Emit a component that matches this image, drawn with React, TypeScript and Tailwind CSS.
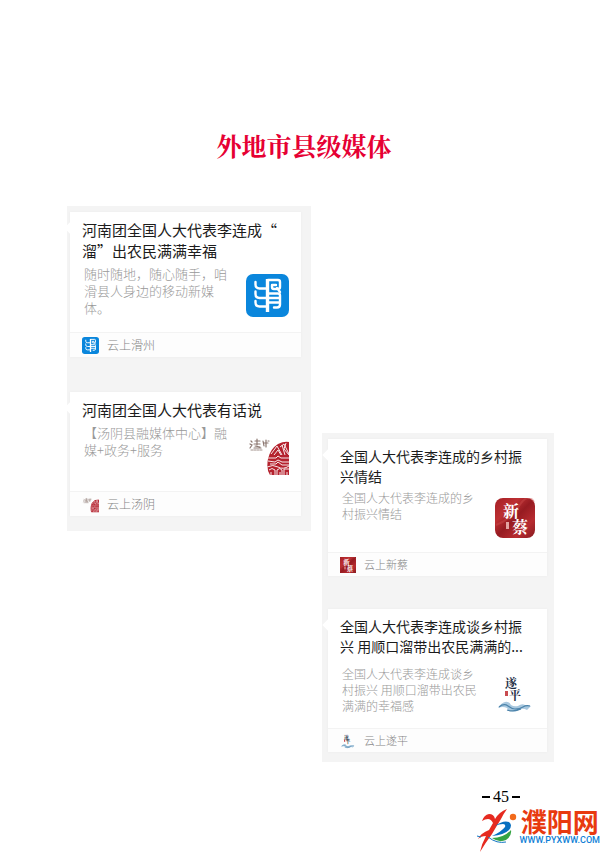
import type { ReactNode } from "react";

const sans = "font-['Noto_Sans_CJK_SC',sans-serif]";
const serif = "font-['Noto_Serif_CJK_SC','Noto_Sans_CJK_SC',serif]";

function HuazhouLogo({ className }: { className: string }) {
  return (
    <svg viewBox="0 0 43 43" className={className} role="img" aria-label="云上滑州">
      <rect width="43" height="43" rx="7" fill="#0a86dc" />
      <g fill="none" stroke="#fff" strokeWidth="2.4" strokeLinecap="round" strokeLinejoin="round">
        <path d="M9.500 8v2.500q0 4 4 4H20" />
        <path d="M9.500 17.500v2.500q0 4 4 4H20" />
        <path d="M9.500 27v1.500q0 4 4 4H20" />
        <path d="M22 6h10q2 0 2 2v5q0 2-2 2h-4q-2 0-2-2v-2h4M31 14l3 4" />
        <path d="M22 19.500h10q2 0 2 2v9q0 3-3 3h-3" />
        <path d="M22 24h11M22 28.500h11" />
      </g>
      <path d="M21.500 5v33" stroke="#fff" strokeWidth="3.400" />
    </svg>
  );
}

function TangyinLogo({ className }: { className: string }) {
  return (
    <svg viewBox="0 0 43 43" className={className} role="img" aria-label="云上汤阴">
      <defs>
        <clipPath id="seal">
          <path d="M43 9V42H24Q20 36 22 26Q24 16 32 11Q38 8 43 9Z" />
        </clipPath>
      </defs>
      <g fill="none" stroke="#8c7770" strokeWidth="1.200" strokeLinecap="round">
        <path d="M5 8l1 1M4 11l2 1-2 3M9 8h5M11 6v6M8 11h6M9 13l5 1M8 15h7M17 8l1 5M20 7v7M22 8h1M18 10h4" />
        <path d="M5 17h11" strokeWidth="0.800" strokeDasharray="2 1" />
      </g>
      <g clipPath="url(#seal)">
        <rect x="20" y="8" width="23" height="35" fill="#b5222e" />
        <g fill="none" stroke="#fff" strokeWidth="0.900">
          <path d="M25 21l6-8 5 9M28 22l4-5 3 5M34 14l4-3 5 10M36 12l3 10M40 10l-2 6 5 6" />
          <path d="M22 25h8l2-2 3 2h8M22 28l7 1 3-2 4 2h7M24 31h6l2-2 4 3h7" />
          <path d="M21 34q6-3 11 0t11-1M23 37q3-3 6 0v5M31 42v-5q3-3 5 0v5M38 42v-6h5M25 42v-3M34 42v-3M41 42v-3" />
        </g>
      </g>
    </svg>
  );
}

function XincaiLogo({ className, rounded }: { className: string; rounded: boolean }) {
  return (
    <svg viewBox="0 0 40 40" className={className} role="img" aria-label="云上新蔡">
      <defs>
        <linearGradient id="silk" x1="0" y1="0" x2="1" y2="1">
          <stop offset="0" stopColor="#a51f25" />
          <stop offset="0.300" stopColor="#bd3033" />
          <stop offset="0.500" stopColor="#961b21" />
          <stop offset="0.750" stopColor="#b72b30" />
          <stop offset="1" stopColor="#871b20" />
        </linearGradient>
      </defs>
      <rect width="40" height="40" rx={rounded ? 8 : 0} fill="url(#silk)" />
      <path d="M1 27Q15 22 24 8T39 4" fill="none" stroke="#d05050" strokeOpacity="0.400" strokeWidth="2" />
      <text x="8" y="19" fontSize="16" fontWeight="700" fill="#fff" className={serif}>新</text>
      <text x="17" y="35" fontSize="16" fontWeight="700" fill="#fff" className={serif}>蔡</text>
      <rect x="11" y="24" width="3" height="7" fill="#e3a3a0" />
    </svg>
  );
}

function SuipingLogo({ className }: { className: string }) {
  return (
    <svg viewBox="0 0 40 40" className={className} role="img" aria-label="云上遂平">
      <text x="10" y="14" fontSize="12" fontWeight="700" fill="#1c2d44" className={serif}>遂</text>
      <text x="14" y="26" fontSize="12" fontWeight="700" fill="#1c2d44" className={serif}>平</text>
      <rect x="10" y="17" width="3" height="5" fill="#c94b50" />
      <path d="M3 34Q6 29 10 28Q14 27 16 31Q19 33 23 32Q27 29 30 31Q34 31 36 32L32 36Q27 33 22 37Q15 39 12 34Q8 32 3 34Z" fill="#a9c8df" />
      <path d="M4 33q5-4 9-1t7 3q5 0 8-2t7-1M12 36q7 2 14-1" fill="none" stroke="#4d84ab" strokeWidth="1.200" />
    </svg>
  );
}

type CardProps = {
  title: string;
  description: string;
  source: string;
  large?: boolean;
  spaced?: boolean;
  logo: ReactNode;
  badge: ReactNode;
};

function ArticleCard({ title, description, source, large, spaced, logo, badge }: CardProps) {
  return (
    <article className="relative bg-white shadow-[0_0_2px_#ececec]">
      <span className="absolute top-3 -left-1 size-2 rotate-45 bg-white" />
      <div className={large ? "px-3 pt-[7px] pb-[15px]" : "px-3 pt-[7px] pb-[14px]"}>
        <h2
          className={
            large
              ? "text-[15px] leading-[21px] whitespace-pre text-[#1c1c1c]"
              : "text-[14px] leading-[20px] text-[#1c1c1c]"
          }
        >
          {title}
        </h2>
        <div className={spaced ? "mt-[10px] flex justify-between" : "mt-1 flex justify-between"}>
          <p
            className={
              large
                ? "w-[146px] pl-[2px] text-[13px] leading-[17px] font-light text-[#999]"
                : "w-[140px] pl-[2px] text-[12px] leading-[16px] font-light text-[#999]"
            }
          >
            {description}
          </p>
          <div className={large ? "mt-[9px] shrink-0" : "mt-2 shrink-0"}>{logo}</div>
        </div>
      </div>
      <footer
        className={
          large
            ? "flex h-[25px] items-center gap-2 border-t border-[#f3f3f3] bg-[#fdfdfd] px-3 text-[12px] font-light text-[#858585]"
            : "flex h-[24px] items-center gap-2 border-t border-[#f3f3f3] bg-[#fdfdfd] px-3 text-[11px] font-light text-[#858585]"
        }
      >
        {badge}
        <span>{source}</span>
      </footer>
    </article>
  );
}

function SiteLogo() {
  return (
    <svg viewBox="0 0 43 44" className="h-[44px] w-[43px]" role="img" aria-label="濮阳网">
      <path d="M5 12Q7 6 12 5Q17 5 18 10Q22 3 30 0Q27 4 24 10Q19 18 15 25Q9 33 3 43Q5 34 9 27Q4 27 1 30Q4 24 12 21L16 14Q14 10 11 10Q8 10 5 12Z" fill="#e62a20" />
      <path d="M18 17Q26 11 32 13Q36 16 32 21Q27 26 15 27Q24 23 28 18Q29 15 26 15Q22 15 18 17Z" fill="#0870c0" />
      <path d="M15 29Q27 29 34 21Q35 27 29 31Q22 34 15 29Z" fill="#35a443" />
      <path d="M0 27l4 1M11 28q9 7 18 5" stroke="#1477c3" strokeWidth="1" fill="none" />
      <circle cx="36" cy="8" r="3.200" fill="#f26a1b" />
    </svg>
  );
}

export default function App() {
  return (
    <div lang="zh-CN" className={`min-h-screen bg-white ${sans}`}>
      <header className="pt-[125px] pl-1 text-center">
        <h1 className={`text-[25px] leading-[40px] font-bold text-[#e60033] ${serif}`}>外地市县级媒体</h1>
      </header>

      <main className="mt-[41px] grid grid-cols-[244fr_232fr] items-start gap-[11px] pr-[50px] pl-[67px]">
        <section className="flex flex-col gap-[35px] bg-[#f4f4f4] pt-[6px] pr-[10px] pb-[15px] pl-[3px]">
          <ArticleCard
            large
            title={"河南团全国人大代表李连成“\n溜”出农民满满幸福"}
            description="随时随地，随心随手，咱滑县人身边的移动新媒体。"
            source="云上滑州"
            logo={<HuazhouLogo className="size-[43px]" />}
            badge={<HuazhouLogo className="size-[17px]" />}
          />
          <ArticleCard
            large
            title="河南团全国人大代表有话说"
            description="【汤阴县融媒体中心】融媒+政务+服务"
            source="云上汤阴"
            logo={<TangyinLogo className="size-[43px]" />}
            badge={<TangyinLogo className="size-[17px]" />}
          />
        </section>

        <section className="mt-[227px] flex flex-col gap-[33px] bg-[#f4f4f4] pt-[6px] pr-[7px] pb-[10px] pl-[6px]">
          <ArticleCard
            title="全国人大代表李连成的乡村振兴情结"
            description="全国人大代表李连成的乡村振兴情结"
            source="云上新蔡"
            logo={<XincaiLogo rounded className="size-[40px]" />}
            badge={<XincaiLogo rounded={false} className="size-[16px]" />}
          />
          <ArticleCard
            spaced
            title="全国人大代表李连成谈乡村振兴 用顺口溜带出农民满满的..."
            description="全国人大代表李连成谈乡村振兴 用顺口溜带出农民满满的幸福感"
            source="云上遂平"
            logo={<SuipingLogo className="size-[40px]" />}
            badge={<SuipingLogo className="size-[16px]" />}
          />
        </section>
      </main>

      <footer className="mt-[23px] flex flex-col items-end">
        <p className="flex items-center gap-[3px] pr-[84px] font-['Liberation_Serif',serif] text-[16px] leading-[24px] text-black">
          <span className="h-[2px] w-2 bg-black" />
          <span>45</span>
          <span className="h-[2px] w-2 bg-black" />
        </p>
        <a href="#top" className="flex pr-1">
          <SiteLogo />
          <span className="flex flex-col items-center">
            <span className="text-[26px] leading-[24px] font-bold text-[#e83a10]">濮阳网</span>
            <span className="mt-[2px] font-[Roboto,sans-serif] text-[9px] leading-[10px] font-medium text-[#0f7fd6]">WWW.PYXWW.COM</span>
          </span>
        </a>
      </footer>
    </div>
  );
}
